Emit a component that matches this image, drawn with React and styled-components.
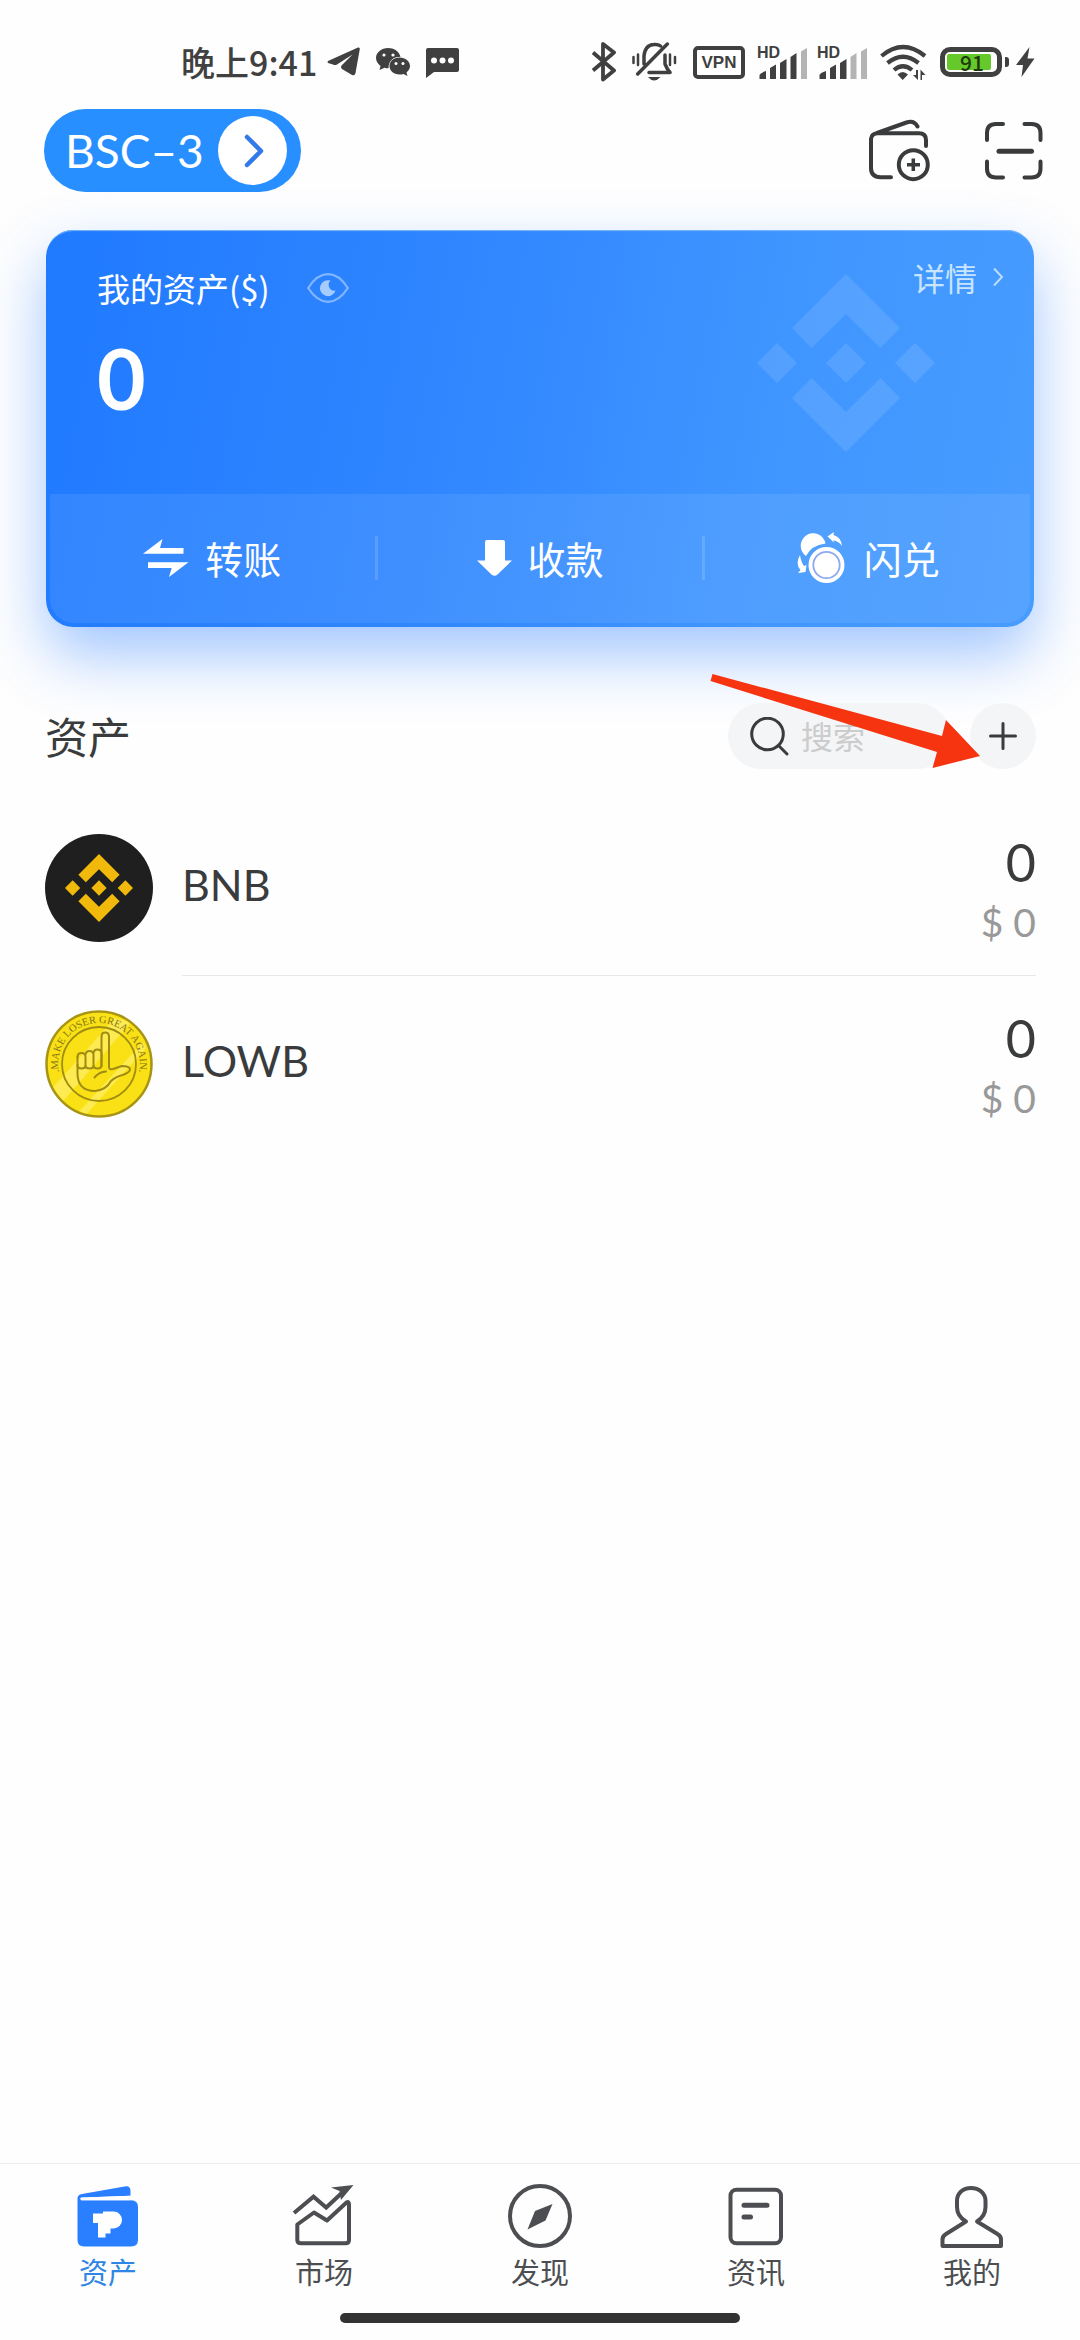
import React from "react";
import styled, { createGlobalStyle } from "styled-components";

const GlobalStyle = createGlobalStyle`
  *, *::before, *::after { box-sizing: border-box; }
  html, body { margin: 0; padding: 0; background: #fefefe; }
  body { font-family: Lato, "Noto Sans CJK SC", sans-serif; color: #3a3b3d; }
  button, input { font: inherit; color: inherit; border: 0; background: none; margin: 0; padding: 0; }
  button { cursor: pointer; }
  svg { display: block; flex: none; }
  ul { list-style: none; margin: 0; padding: 0; }
  h1, h2, p { margin: 0; font-weight: 400; }
`;

const cjk = `"Noto Sans CJK SC", sans-serif`;

const Page = styled.div`
  min-height: 100vh;
  display: flex;
  flex-direction: column;
`;

/* ---------- status bar ---------- */

const StatusBar = styled.div`
  display: flex;
  justify-content: space-between;
  align-items: center;
  height: 109px;
  padding: 30px 45px 15px 181px;
  color: #404040;
`;

const StatusGroup = styled.div`
  display: flex;
  align-items: center;
  gap: ${(p) => p.$gap}px;
`;

const Clock = styled.span`
  font: 500 34px/40px ${cjk};
`;

const VpnBadge = styled.span`
  width: 52px;
  height: 33px;
  border: 4px solid #404040;
  border-radius: 5px;
  font: 700 17px/25px "Liberation Sans", sans-serif;
  text-align: center;
`;

const Battery = styled.span`
  display: flex;
  align-items: center;
  gap: 3px;
  &::after {
    content: "";
    width: 4px;
    height: 10px;
    border-radius: 0 3px 3px 0;
    background: #404040;
  }
`;

const BatteryShell = styled.span`
  width: 62px;
  height: 30px;
  padding: 2px;
  border: 5px solid #404040;
  border-radius: 10px;
`;

const BatteryLevel = styled.span`
  display: block;
  width: 44px;
  height: 16px;
  border-radius: 2px;
  background: #66c92b;
  color: #1d3b0b;
  font: 500 21px/16px ${cjk};
  text-align: center;
  padding-left: 6px;
`;

const Signal = ({ strength }) => {
  const bars = [
    "M2.5 33V29Q3 27 9 25V33Z",
    "M13 33V22L19 18.500V33Z",
    "M23 33V17L29.500 13V33Z",
    "M33.500 33V11L39.500 7V33Z",
    "M44 33V5.500L50 2V33Z",
  ];
  return (
    <svg width="51" height="36" viewBox="0 -2 51 36">
      <text x="0" y="12" fontFamily="Liberation Sans, sans-serif" fontWeight="700" fontSize="16" fill="#404040">HD</text>
      {bars.map((d, i) => (
        <path key={d} d={d} fill={i < strength ? "#404040" : "#b4b4b4"} />
      ))}
    </svg>
  );
};

/* ---------- header ---------- */

const Header = styled.header`
  display: flex;
  justify-content: space-between;
  align-items: center;
  padding: 0 34px 0 44px;
`;

const WalletSwitch = styled.button`
  display: flex;
  align-items: center;
  gap: 14px;
  height: 83px;
  padding: 0 14px 0 21px;
  border-radius: 42px;
  background: #278fff;
  color: #fff;
  font-size: 46px;
  line-height: 54px;
`;

const Round = styled.span`
  display: grid;
  place-items: center;
  width: 69px;
  height: 69px;
  padding-left: 4px;
  border-radius: 50%;
  background: #fff;
`;

const HeaderTools = styled.div`
  display: flex;
  gap: 50px;
`;

/* ---------- balance card ---------- */

const Card = styled.section`
  position: relative;
  margin: 38px 46px 0;
  border-radius: 27px;
  background: linear-gradient(100deg, #207aff 0%, #2f86ff 40%, #4096ff 72%, #489cff 100%);
  box-shadow: 0 28px 62px rgba(30, 118, 255, 0.42), inset 0 2px 1px -1px #7ab8ff;
  color: #fff;
`;

const CardTop = styled.div`
  display: flex;
  justify-content: space-between;
  align-items: flex-start;
  min-height: 264px;
  padding: 27px 30px 0 51px;
`;

const Balance = styled.div`
  padding-top: 11px;
`;

const BalanceTitle = styled.h1`
  display: flex;
  align-items: center;
  gap: 37px;
  font: 400 33px/40px ${cjk};
`;

const Amount = styled.p`
  margin-top: 28px;
  font-size: 84px;
  font-weight: 700;
  line-height: 84px;
`;

const DetailLink = styled.a`
  position: relative;
  z-index: 1;
  display: flex;
  align-items: center;
  gap: 15px;
  color: #c8e5ff;
  font: 400 32px/40px ${cjk};
  text-decoration: none;
`;

const Watermark = styled.div`
  position: absolute;
  top: 44px;
  right: 99px;
  color: rgba(255, 255, 255, 0.1);
`;

const Inset = styled.div`
  padding: 0 4px 4px;
`;

const Actions = styled.div`
  display: flex;
  align-items: center;
  height: 129px;
  padding-bottom: 2px;
  border-radius: 0 0 24px 24px;
  background: rgba(255, 255, 255, 0.08);
`;

const Action = styled.button`
  flex: 1;
  display: flex;
  align-items: center;
  justify-content: center;
  gap: 16px;
  font: 400 38px/56px ${cjk};
`;

const Divider = styled.span`
  width: 3px;
  height: 44px;
  background: rgba(255, 255, 255, 0.14);
`;

/* ---------- asset list ---------- */

const Assets = styled.main`
  flex: 1;
  padding: 76px 44px 0 45px;
`;

const AssetsBar = styled.div`
  position: relative;
  display: flex;
  align-items: center;
  gap: 20px;
`;

const AssetsTitle = styled.h2`
  flex: 1;
  padding-bottom: 2px;
  font: 400 43px/64px ${cjk};
`;

const Search = styled.label`
  display: flex;
  align-items: center;
  gap: 12px;
  width: 222px;
  height: 66px;
  padding: 0 22px;
  border-radius: 33px;
  background: #f4f5f7;
  input {
    flex: 1;
    min-width: 0;
    height: 48px;
    padding-bottom: 2px;
    outline: 0;
    font: 400 32px/46px ${cjk};
  }
  input::placeholder { color: #cccccc; opacity: 1; }
`;

const AddButton = styled.button`
  display: grid;
  place-items: center;
  width: 66px;
  height: 66px;
  border-radius: 50%;
  background: #f4f5f7;
`;

const Pointer = styled.svg`
  position: absolute;
  top: -31px;
  right: 55px;
  pointer-events: none;
`;

const AssetList = styled.ul`
  margin-top: 31px;
  li:last-child > div { border-color: transparent; }
`;

const Asset = styled.li`
  display: flex;
  align-items: center;
  gap: 29px;
`;

const AssetInfo = styled.div`
  flex: 1;
  display: flex;
  align-items: center;
  justify-content: space-between;
  height: 176px;
  border-bottom: 1px solid #e8e8e8;
`;

const AssetName = styled.span`
  font-size: 43px;
  line-height: 56px;
  padding-bottom: 6px;
`;

const AssetValue = styled.div`
  display: flex;
  flex-direction: column;
  align-items: flex-end;
  padding-top: 8px;
  font-size: 52px;
  line-height: 60px;
  small { color: #999; font-size: 39px; line-height: 60px; }
`;

/* ---------- tab bar ---------- */

const TabBar = styled.nav`
  padding: 20px 0 17px;
  border-top: 1px solid #ebebeb;
`;

const Tabs = styled.div`
  display: flex;
`;

const Tab = styled.a`
  flex: 1;
  display: flex;
  flex-direction: column;
  align-items: center;
  gap: 5px;
  color: ${(p) => (p.$active ? "#2f86e4" : "#4c4e51")};
  font: 400 29px/36px ${cjk};
  text-decoration: none;
`;

const HomeIndicator = styled.div`
  width: 37%;
  height: 10px;
  margin: 24px auto 0;
  border-radius: 5px;
  background: #333;
`;

/* ---------- drawings ---------- */

const BinanceMark = ({ size, ...rest }) => (
  <svg width={size} height={size} viewBox="0 0 178 178" fill="currentColor" {...rest}>
    <path d="M89 0 143 54 123.500 74 89 40 54.500 74 35 54Z" />
    <path d="M89 178 143 124 123.500 104 89 138 54.500 104 35 124Z" />
    <path d="M0 89 20 69 40 89 20 109ZM69 89 89 69 109 89 89 109ZM138 89 158 69 178 89 158 109Z" />
  </svg>
);

const BnbCoin = () => (
  <svg width="108" height="108" viewBox="0 0 108 108">
    <circle cx="54" cy="54" r="54" fill="#1f1f1f" />
    <g color="#f0b90b"><BinanceMark size={68} x="20" y="20" /></g>
  </svg>
);

const LowbCoin = () => (
  <svg width="108" height="108" viewBox="0 0 108 108">
    <defs>
      <clipPath id="coin-face"><circle cx="54" cy="54" r="51" /></clipPath>
      <path id="coin-rim" d="M17 71A40.800 40.800 0 1 1 91 71" />
    </defs>
    <circle cx="54" cy="54" r="52.500" fill="#fbe216" stroke="#a89414" strokeWidth="2.500" />
    <g clipPath="url(#coin-face)" fill="#fff27a" opacity="0.6">
      <path d="M2 84 70 8 86 12 14 96Z" />
      <path d="M30 106 98 32 101 38 38 108Z" />
    </g>
    <circle cx="54" cy="54" r="37" fill="none" stroke="#a08c10" strokeWidth="1.800" />
    <text fontFamily="Liberation Serif, serif" fontSize="10.500" fill="#857518">
      <textPath href="#coin-rim" startOffset="50%" textAnchor="middle">.MAKE LOSER GREAT AGAIN.</textPath>
    </text>
    <g fill="none" stroke="#a08c10" strokeWidth="2" strokeLinecap="round" strokeLinejoin="round">
      <path d="M56.500 56V26.500Q56.500 22.500 60.200 22.500T64 26.500V57Q64 60 68 59L77 56Q85 56 85 59.500Q85 62 79 64.500Q70 67 66 71Q61 80 50 81Q33 81 32.500 64V47" />
      <path d="M32.500 47Q32.500 43 36.500 43T40.500 47V55Q40.500 58.500 36.500 58.500T32.500 55M40.500 44.500Q41 41 44.500 41T48.500 44.500V55Q48.500 58.500 44.500 58.500T40.500 55M48.500 43Q49 39.500 52.500 39.500T56.500 43V55Q56.500 58.500 52.500 58.500T48.500 55" />
      <path d="M49.500 67.500Q54 62 61 61.500" />
    </g>
  </svg>
);

const tabIcon = { width: 64, height: 64, viewBox: "0 0 64 64" };
const line = { fill: "none", stroke: "#4c4e51", strokeWidth: 4, strokeLinejoin: "round" };

const tabs = [
  {
    label: "资产",
    icon: (
      <svg {...tabIcon}>
        <path fill="#297fff" d="M1.500 14Q2 10.500 6 10L50 2.300Q54.500 2 54.500 7V11.700L6 13.500Q4 14 5 16.300H55Q62 16.300 62 23V56Q62 62.500 55 62.500H8Q1.500 62.500 1.500 56Z" />
        <path fill="#fff" d="M4.500 13.800 54.500 11.700V16.200H5.500Q3.500 15 4.500 13.800Z" />
        <path fill="#fff" d="M17 29.500H27V27.500H37.500A8.500 8.500 0 0 1 37.500 44.500H34.500V49.500H29.500V53.500H22V39H17Z" />
      </svg>
    ),
  },
  {
    label: "市场",
    icon: (
      <svg {...tabIcon}>
        <path {...line} strokeLinejoin="miter" d="M2 29 21.500 12.700 34.200 23.500 53 6" />
        <path fill="#4c4e51" d="M61.500 1 39 3.500 47.500 7 49 16Z" />
        <path {...line} d="M5.300 40.500 22 28.500 35 36.500 54.500 18.500Q57 17 57 20.500V56Q57 59.300 53.500 59.300H9Q5.300 59.300 5.300 56Z" />
      </svg>
    ),
  },
  {
    label: "发现",
    icon: (
      <svg {...tabIcon}>
        <circle {...line} cx="32" cy="32" r="30" />
        <path fill="#4c4e51" d="M44.500 20 37.500 36.500 19.500 45.500 27 27Z" />
      </svg>
    ),
  },
  {
    label: "资讯",
    icon: (
      <svg {...tabIcon}>
        <rect {...line} x="6.500" y="5.700" width="50.500" height="53.600" rx="6" />
        <path {...line} strokeWidth="5" strokeLinecap="round" d="M20 21.300H43M20 33H26.500" />
      </svg>
    ),
  },
  {
    label: "我的",
    icon: (
      <svg {...tabIcon}>
        <path {...line} strokeLinecap="round" d="M26 37.500C20 34 17 29 17 23V17C17 9 23 4 31 4S45.500 9 45.500 17V23C45.500 29 42.500 34 37 37.500L57.500 50Q61 52 61 55.500V62H2.500V55.500Q2.500 52 6 50L26 37.500" />
      </svg>
    ),
  },
];

const assets = [
  { name: "BNB", icon: <BnbCoin />, amount: "0", fiat: "$ 0" },
  { name: "LOWB", icon: <LowbCoin />, amount: "0", fiat: "$ 0" },
];

export default function App() {
  return (
    <Page>
      <GlobalStyle />
      <StatusBar>
        <StatusGroup $gap={10}>
          <Clock>晚上9:41</Clock>
          <StatusGroup $gap={16}>
            <svg width="33" height="30" viewBox="0 0 33 30" fill="#404040">
              <path d="M1 14 31 .5Q33 0 32.800 2L28.500 26Q28 29 25 28L15 22Q13 20 15 18L25.500 7.500 10 17.500Q8 18.500 6 17.500L1 16Q0 15 1 14Z" />
            </svg>
            <svg width="34" height="30" viewBox="0 0 34 30">
              <path fill="#404040" d="M12 1C5.500 1 0 5.500 0 11c0 3 2 6 4.500 8L3.500 23l5-2.300c1.500.4 3 .5 4 .5 0-7 4-11.500 12-11.500C23 4 18 1 12 1Z" />
              <path fill="#404040" d="M23.500 10.500c-6 0-10 4-10 8.500s4 8.500 10 8.500c1.500 0 2.700-.2 4-.6l4 2.100-1-3.500c2.200-2 3.500-4 3.500-6.500 0-4.500-4.500-8.500-10.500-8.500Z" />
              <g fill="#fff"><circle cx="8" cy="8" r="1.600" /><circle cx="17" cy="8" r="1.600" /><circle cx="20" cy="16.500" r="1.500" /><circle cx="27" cy="16.500" r="1.500" /></g>
            </svg>
            <svg width="34" height="32" viewBox="0 -2 34 32">
              <path fill="#404040" d="M2 0H31Q33 0 33 2V22Q33 24 31 24H8L0 30V2Q0 0 2 0Z" />
              <g fill="#fff"><circle cx="8" cy="12.500" r="3" /><circle cx="16.500" cy="12.500" r="3" /><circle cx="25" cy="12.500" r="3" /></g>
            </svg>
          </StatusGroup>
        </StatusGroup>
        <StatusGroup $gap={12}>
          <StatusGroup $gap={16}>
            <svg width="24" height="40" viewBox="0 0 24 40" fill="none" stroke="#404040" strokeWidth="3.800" strokeLinejoin="round">
              <path d="M1 10.500 22 28.500 11 37.500V2L22 10.500 1 28.500" />
            </svg>
            <svg width="45" height="40" viewBox="0 0 45 40" fill="none" stroke="#404040" strokeWidth="3.500" strokeLinecap="round" strokeLinejoin="round">
              <path d="M35.300 2 5.700 32M12 22V14Q13 3 22 2.500Q26 2 28.500 4M33 13V22Q35 27 38 30.500H17" />
              <path strokeWidth="2.500" d="M1.500 15V21M6 12.500V23M38 12.500V23M43 15V21" />
              <path fill="#404040" stroke="none" d="M16 35H28.500Q22 42 16 35Z" />
            </svg>
            <VpnBadge>VPN</VpnBadge>
          </StatusGroup>
          <StatusGroup $gap={9}>
            <Signal strength={4} />
            <Signal strength={3} />
          </StatusGroup>
          <svg width="48" height="37" viewBox="0 0 48 37" fill="none" stroke="#404040" strokeWidth="4.200">
            <path d="M1.500 12Q23 -6 45 12M7.500 19Q23 6.500 38.500 19M14 26Q23 18.500 32 26" />
            <path fill="#404040" stroke="none" d="M17.500 30.500Q22.700 25.500 28 30.500L22.700 36ZM36 26V31H33L38 36V26ZM42 36V31H45.500L40.500 25.500V36Z" />
          </svg>
          <StatusGroup $gap={7}>
            <Battery><BatteryShell><BatteryLevel>91</BatteryLevel></BatteryShell></Battery>
            <svg width="19" height="30" viewBox="0 0 19 30" fill="#404040">
              <path d="M13.500 0 0 18H7L5.500 30 18.500 11.500H11.500Z" />
            </svg>
          </StatusGroup>
        </StatusGroup>
      </StatusBar>

      <Header>
        <WalletSwitch>
          BSC–3
          <Round>
            <svg width="20" height="34" viewBox="0 0 20 34" fill="none" stroke="#3379ea" strokeWidth="4.500" strokeLinecap="round" strokeLinejoin="round">
              <path d="M3 3 17 17 3 31" />
            </svg>
          </Round>
        </WalletSwitch>
        <HeaderTools>
          <button aria-label="添加钱包">
            <svg width="64" height="64" viewBox="0 0 64 64" fill="none" stroke="#3a3b3d" strokeWidth="4" strokeLinecap="round" strokeLinejoin="round">
              <path d="M23 58.300H12.500Q3 58 3 49V20Q3.500 14.300 10 14.300H51Q58 14.300 58 21V27M9 14 38.500 3.500Q46 1 49.500 7.500" />
              <circle cx="45.300" cy="45.700" r="14.500" />
              <path strokeLinecap="butt" strokeWidth="3.500" d="M39 45.700H52M45.300 39.500V52" />
            </svg>
          </button>
          <button aria-label="扫一扫">
            <svg width="64" height="64" viewBox="0 0 64 64" fill="none" stroke="#3a3b3d" strokeWidth="4" strokeLinecap="round">
              <path d="M5 21V14Q5 5 14 5H21M42.500 5H49.500Q58.500 5 58.500 14V21M58.500 42.500V49.500Q58.500 58.500 49.500 58.500H42.500M21 58.500H14Q5 58.500 5 49.500V42.500" />
              <path strokeWidth="5" d="M17 32.300H49.500" />
            </svg>
          </button>
        </HeaderTools>
      </Header>

      <Card>
        <Watermark><BinanceMark size={178} /></Watermark>
        <CardTop>
          <Balance>
            <BalanceTitle>
              我的资产($)
              <svg width="42" height="30" viewBox="0 0 42 30">
                <path d="M1.200 15Q10 1.200 21 1.200T40.800 15Q32 28.800 21 28.800T1.200 15Z" fill="none" stroke="#83b7ff" strokeWidth="2.200" />
                <path d="M23.500 7.600A8 8 0 1 0 28.600 17.500A5.800 5.800 0 0 1 23.500 7.600Z" fill="#a5cbff" />
              </svg>
            </BalanceTitle>
            <Amount>0</Amount>
          </Balance>
          <DetailLink href="#detail">
            详情
            <svg width="12" height="20" viewBox="0 0 12 20" fill="none" stroke="#b8dcff" strokeWidth="2">
              <path d="M2 1.500 10 10 2 18.500" />
            </svg>
          </DetailLink>
        </CardTop>
        <Inset>
          <Actions>
            <Action>
              <svg width="46" height="38" viewBox="0 0 46 38" fill="#fff">
                <path d="M0 14.700 19.500 0 17 9H40.500V14.700ZM5 23.300H45.500L26 38 28.700 29H5Z" />
              </svg>
              转账
            </Action>
            <Divider />
            <Action>
              <svg width="35" height="36" viewBox="0 0 35 36" fill="#fff">
                <path d="M10 0H26Q28 0 28 2V20.500H35L20.500 34.500Q17.500 37 14.500 34.500L0 20.500H8V2Q8 0 10 0Z" />
              </svg>
              收款
            </Action>
            <Divider />
            <Action>
              <svg width="52" height="52" viewBox="-1 0 52 52">
                <path fill="#fff" d="M9 24A12.500 12.500 0 1 1 28.500 11.500Q14 13.500 9 24Z" />
                <circle cx="29.500" cy="33" r="18" fill="#fff" />
                <circle cx="29.500" cy="33" r="13.200" fill="none" stroke="#8fa8f0" strokeWidth="1.800" />
                <path fill="#fff" d="M30.500 4.500 37 0 36.500 3Q44 5 45 14Q41 8.500 36 8.500L37.500 11ZM3 23Q4 30 7 34L9.500 33 8.500 40 1 41 3.500 38Q-2 32 3 23Z" />
              </svg>
              闪兑
            </Action>
          </Actions>
        </Inset>
      </Card>

      <Assets>
        <AssetsBar>
          <AssetsTitle>资产</AssetsTitle>
          <Search>
            <svg width="39" height="39" viewBox="0 0 39 39" fill="none" stroke="#3a3b3d" strokeWidth="3" strokeLinecap="round">
              <circle cx="17.500" cy="17" r="15.800" />
              <path d="M29 29 37 37" />
            </svg>
            <input type="text" placeholder="搜索" aria-label="搜索" />
          </Search>
          <AddButton aria-label="添加资产">
            <svg width="28" height="28" viewBox="0 0 28 28" stroke="#3a3b3d" strokeWidth="3" strokeLinecap="round">
              <path d="M14 1.500V26.500M1.500 14H26.500" />
            </svg>
          </AddButton>
          <Pointer width="272" height="98" viewBox="0 0 272 98">
            <path fill="#f73410" d="M3.500 2 233 64 237 48 271 84 223.500 96 228 80 1.500 9Z" />
          </Pointer>
        </AssetsBar>
        <AssetList>
          {assets.map((a) => (
            <Asset key={a.name}>
              {a.icon}
              <AssetInfo>
                <AssetName>{a.name}</AssetName>
                <AssetValue>
                  {a.amount}
                  <small>{a.fiat}</small>
                </AssetValue>
              </AssetInfo>
            </Asset>
          ))}
        </AssetList>
      </Assets>

      <TabBar>
        <Tabs>
          {tabs.map((t, i) => (
            <Tab key={t.label} href="#" $active={i === 0}>
              {t.icon}
              {t.label}
            </Tab>
          ))}
        </Tabs>
        <HomeIndicator />
      </TabBar>
    </Page>
  );
}
